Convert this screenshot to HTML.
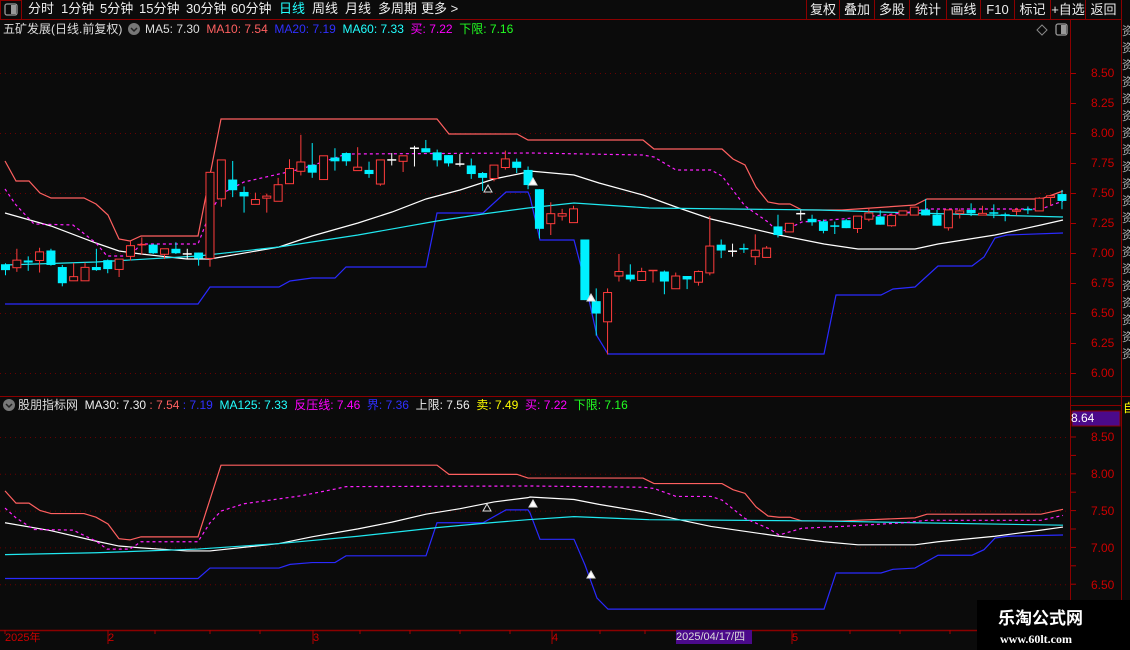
<!DOCTYPE html>
<html><head><meta charset="utf-8"><style>
body{margin:0;background:#0b0b0b;width:1130px;height:650px;overflow:hidden;position:relative;font-family:"Liberation Sans","Noto Sans CJK SC",sans-serif;}
.t{position:absolute;white-space:nowrap;font-size:12px;line-height:14px}
.btn{position:absolute;top:0;height:19px;line-height:19px;color:#eee;font-size:13px;text-align:center;border-right:1px solid #8b0000}
</style></head><body>
<svg width="1130" height="650" style="position:absolute;left:0;top:0" id="s">
<rect x="0" y="0" width="1130" height="650" fill="#0b0b0b"/>
<!-- toolbar -->
<line x1="0" y1="19.5" x2="1122" y2="19.5" stroke="#8b0000"/>
<rect x="0.5" y="0.5" width="21" height="19" fill="none" stroke="#8b0000"/>
<rect x="5" y="4" width="12" height="11" rx="2" fill="none" stroke="#999" stroke-width="1.3"/>
<rect x="11" y="5" width="5" height="9" fill="#999"/>
<line x1="806.5" y1="0" x2="806.5" y2="19" stroke="#8b0000"/>
<!-- panel frames -->
<line x1="1070.5" y1="20" x2="1070.5" y2="630" stroke="#8b0000"/>
<line x1="1121.5" y1="20" x2="1121.5" y2="650" stroke="#8b0000"/>
<line x1="0" y1="396.5" x2="1130" y2="396.5" stroke="#8b0000"/>
<line x1="0" y1="630.5" x2="1070" y2="630.5" stroke="#8b0000" stroke-width="1.5"/>
<line x1="1070" y1="405.5" x2="1121" y2="405.5" stroke="#8b0000"/>
<rect x="1072" y="411" width="48" height="15" fill="#4b0a8a" stroke="#8b0000"/>
<!-- icons top right -->
<path d="M1042 25 l5 5 l-5 5 l-5 -5z" fill="none" stroke="#888"/>
<rect x="1056" y="24" width="11" height="11" rx="2" fill="none" stroke="#999" stroke-width="1.3"/>
<rect x="1061" y="25" width="5" height="9" fill="#999"/>
<!-- legend icons -->
<circle cx="134" cy="29" r="6" fill="#777"/><path d="M131 28 l3 3 l3 -3" stroke="#222" fill="none" stroke-width="1.5"/>
<circle cx="9" cy="405" r="6" fill="#777"/><path d="M6 404 l3 3 l3 -3" stroke="#222" fill="none" stroke-width="1.5"/>
<g id="grid"></g>
<g id="lines" fill="none" stroke-width="1.2"></g>
<use href="#lines" transform="translate(0,437) scale(1,0.6125) translate(0,-73)"/>
<g id="cand"></g>
<g id="tri"></g>
<!-- watermark -->
<rect x="977" y="600" width="153" height="50" fill="#000"/>
</svg>

<div class="t" style="left:28px;top:2px;font-size:13px;color:#eee;word-spacing:0">分时</div>
<div class="t" style="left:61px;top:2px;font-size:13px;color:#eee">1分钟</div>
<div class="t" style="left:100px;top:2px;font-size:13px;color:#eee">5分钟</div>
<div class="t" style="left:139px;top:2px;font-size:13px;color:#eee">15分钟</div>
<div class="t" style="left:186px;top:2px;font-size:13px;color:#eee">30分钟</div>
<div class="t" style="left:231px;top:2px;font-size:13px;color:#eee">60分钟</div>
<div class="t" style="left:279px;top:2px;font-size:13px;color:#2ff">日线</div>
<div class="t" style="left:312px;top:2px;font-size:13px;color:#eee">周线</div>
<div class="t" style="left:345px;top:2px;font-size:13px;color:#eee">月线</div>
<div class="t" style="left:378px;top:2px;font-size:13px;color:#eee">多周期</div>
<div class="t" style="left:421px;top:2px;font-size:13px;color:#eee">更多 &gt;</div>

<div class="btn" style="left:807px;width:32px">复权</div>
<div class="btn" style="left:840px;width:34px">叠加</div>
<div class="btn" style="left:875px;width:34px">多股</div>
<div class="btn" style="left:910px;width:36px">统计</div>
<div class="btn" style="left:947px;width:33px">画线</div>
<div class="btn" style="left:981px;width:33px">F10</div>
<div class="btn" style="left:1015px;width:35px">标记</div>
<div class="btn" style="left:1051px;width:34px">+自选</div>
<div class="btn" style="left:1086px;width:35px">返回</div>

<div class="t" style="left:3px;top:22px;color:#ddd">五矿发展(日线.前复权)</div>
<div class="t" style="left:145px;top:22px;color:#ddd">MA5: 7.30 <span style="color:#ff6060">&nbsp;MA10: 7.54</span> <span style="color:#3030ff">&nbsp;MA20: 7.19</span> <span style="color:#2ff">&nbsp;MA60: 7.33</span> <span style="color:#f0f">&nbsp;买: 7.22</span> <span style="color:#2f2">&nbsp;下限: 7.16</span></div>

<div class="t" style="left:18px;top:398px;color:#ddd">股朋指标网 <span style="color:#eee">&nbsp;MA30: 7.30</span> <span style="color:#ff6060">: 7.54</span> <span style="color:#3030ff">: 7.19</span> <span style="color:#2ff">&nbsp;MA125: 7.33</span> <span style="color:#f0f">&nbsp;反压线: 7.46</span> <span style="color:#3030ff">&nbsp;界: 7.36</span> <span style="color:#eee">&nbsp;上限: 7.56</span> <span style="color:#ff0">&nbsp;卖: 7.49</span> <span style="color:#f0f">&nbsp;买: 7.22</span> <span style="color:#2f2">&nbsp;下限: 7.16</span></div>

<div id="axis"></div>
<div class="t" style="left:1071px;top:411px;color:#fff;font-size:12px">8.64</div>
<div class="t" style="left:1123px;top:401px;color:#ff0;font-size:12px">自</div>

<div class="t" style="left:5px;top:631px;color:#c00;font-size:11px">2025年</div>
<div class="t" style="left:108px;top:631px;color:#c00;font-size:11px">2</div>
<div class="t" style="left:313px;top:631px;color:#c00;font-size:11px">3</div>
<div class="t" style="left:552px;top:631px;color:#c00;font-size:11px">4</div>
<div class="t" style="left:676px;top:630px;width:76px;height:14px;background:#4b0a8a;color:#ddd;font-size:11px">2025/04/17/四</div>
<div class="t" style="left:792px;top:631px;color:#c00;font-size:11px">5</div>

<div class="t" style="left:998px;top:609px;color:#fff;font-size:17px;font-weight:bold;line-height:20px">乐淘公式网</div>
<div class="t" style="left:1000px;top:632px;color:#fff;font-size:12px;font-weight:bold;font-family:'Liberation Serif',serif">www.60lt.com</div>

<script>
const NS="http://www.w3.org/2000/svg";
function el(p,tag,a){const e=document.createElementNS(NS,tag);for(const k in a)e.setAttribute(k,a[k]);p.appendChild(e);return e;}
const grid=document.getElementById('grid');
// top grid & ticks
for(let i=0;i<=10;i++){const y=73+i*30;
 el(grid,'line',{x1:1071,x2:1076,y1:y+.5,y2:y+.5,stroke:'#a00'});
 if(i%2==0) el(grid,'line',{x1:0,x2:1068,y1:y+.5,y2:y+.5,stroke:'#6a0000','stroke-dasharray':'1 4'});}
for(let i=0;i<=8;i++){const y=437+i*18.4;
 el(grid,'line',{x1:1071,x2:1076,y1:y,y2:y,stroke:'#a00'});
 if(i%2==0) el(grid,'line',{x1:0,x2:1068,y1:y+.5,y2:y+.5,stroke:'#6a0000','stroke-dasharray':'1 4'});}
// x ticks
[5,108,155,210,260,313,360,410,460,510,552,600,645,700,792,850,900,950,1000,1050].forEach(x=>el(grid,'line',{x1:x,x2:x,y1:630,y2:634,stroke:'#a00'}));
[108,313,552,792].forEach(x=>el(grid,'line',{x1:x,x2:x,y1:630,y2:644,stroke:'#a00'}));
const ax=document.getElementById('axis');
const labs=['8.50','8.25','8.00','7.75','7.50','7.25','7.00','6.75','6.50','6.25','6.00'];
labs.forEach((l,i)=>{ax.innerHTML+=`<div class="t" style="left:1091px;top:${73+i*30-7}px;color:#c00;font-size:12px">${l}</div>`;});
['8.50','8.00','7.50','7.00','6.50'].forEach((l,i)=>{ax.innerHTML+=`<div class="t" style="left:1091px;top:${437+i*36.9-7}px;color:#c00;font-size:12px">${l}</div>`;});
// right strip chars
const ch='资资资资资资资资资资资资资资资资资资资资资资资';
for(let i=0;i<20;i++){ax.innerHTML+=`<div class="t" style="left:1122px;top:${24+i*17}px;color:#aaa;font-size:12px">${ch[i]}</div>`;}
const L=document.getElementById('lines');
function pl(pts,col,dash){const a={points:pts.map(p=>p.join(',')).join(' '),stroke:col,'vector-effect':'non-scaling-stroke'};if(dash)a['stroke-dasharray']=dash;el(L,'polyline',a);}
pl([[5,161],[16,181],[29,181],[40,193],[51,198],[84,198],[96,204],[108,215],[119,239],[130,241],[141,236],[198,236],[221,119],[437,119],[449,134],[517,134],[528,140],[643,140],[654,149],[722,149],[733,159],[745,165],[756,187],[768,202],[779,204],[790,204],[802,210],[842,210],[915,205],[927,199],[1041,199],[1063,191]],'#ff6060');
pl([[5,304],[198,304],[210,287],[279,287],[290,281],[312,278],[335,278],[346,267],[426,267],[437,213],[483,213],[506,192],[528,192],[530,197],[540,240],[574,240],[585,282],[597,336],[608,354],[824,354],[836,295],[881,295],[893,289],[915,287],[938,266],[972,266],[984,257],[995,238],[1007,235],[1063,233]],'#2a2aff');
pl([[5,213],[51,226],[96,243],[119,251],[141,254],[187,259],[210,259],[279,247],[312,236],[358,223],[392,212],[426,199],[460,190],[494,179],[528,172],[530,171],[574,175],[599,183],[643,195],[676,207],[711,219],[779,235],[824,244],[858,249],[915,249],[938,244],[995,235],[1041,225],[1063,220]],'#ffffff');
pl([[5,265],[96,262],[198,256],[279,247],[358,235],[437,221],[483,214],[528,208],[574,203],[649,208],[819,210],[915,213],[1063,217]],'#20e8f0');
pl([[5,189],[16,205],[34,224],[73,225],[96,243],[107,256],[130,256],[141,244],[198,244],[210,213],[221,194],[244,182],[279,174],[301,169],[335,158],[346,154],[530,153],[643,155],[654,157],[676,170],[711,170],[722,176],[745,206],[768,222],[779,233],[802,222],[842,219],[904,213],[927,209],[1041,209],[1063,201]],'#ff20ff','3 3');
const A=[['c',448,465,445,480],['r',436,458,403,470],['c',437,443,425,467],['r',412,437,400,472],['c',408,450,403,452],['c',456,503,450,512],['r',484,496,444,496],['r',457,496,443,496],['c',456,465,403,467],['c',436,462,434,474],['r',433,463,433,485],['r',394,425,380,437],['R',391,395,370,420],['c',391,416,389,418],['r',403,419,403,433],['c',403,416,384,418],['w',418,418,403,432],['c',414,431,414,452],['r',181,431,181,455],['r',145,258,145,281],['c',202,233,148,253],['c',238,251,222,298],['r',260,274,240,274],['r',250,256,243,298],['r',217,265,197,265],['r',170,214,143,214],['r',151,178,72,190],['c',159,182,96,197],['r',133,202,133,202],['c',138,149,111,176],['c',125,149,123,162],['r',166,176,108,176],['c',174,186,150,197],['r',145,215,145,220],['w',145,145,125,161],['r',133,149,133,180],['w',111,111,104,164],['c',111,123,87,123],['c',123,146,115,164],['c',131,155,131,164],['w',157,157,128,164],['c',161,186,141,200],['c',183,197,180,235],['r',160,199,160,207],['r',142,167,118,173],['c',150,168,141,183],['c',174,218,164,230]];
const B=[['c',172,287,172,315],['r',243,272,210,305],['r',243,250,229,263],['r',229,269,220,269],['c',318,494,318,494],['c',497,533,460,597],['r',472,557,460,652],['r',411,424,360,440],['c',420,434,390,440],['r',411,437,400,437],['R',408,412,408,443],['c',411,440,408,477],['r',424,461,414,461],['c',424,434,424,462],['r',411,442,408,452],['r',337,415,250,422],['c',333,350,318,372],['w',352,352,330,368],['k',345,345,330,357],['r',349,368,303,392],['r',343,370,337,370],['c',280,305,246,312],['r',271,296,271,296],['w',243,243,233,263],['c',258,268,246,278],['c',265,293,260,300],['k',279,279,266,302],['c',262,285,258,285],['r',250,286,250,299],['r',241,259,226,265],['c',251,275,233,275],['r',248,278,244,281],['r',235,247,235,247],['r',224,247,224,247],['c',231,248,200,248],['c',246,278,232,278],['r',232,284,232,292],['r',235,242,228,257],['c',232,242,213,250],['r',242,247,220,247],['k',241,241,216,256],['k',247,247,240,265],['r',232,236,226,248],['k',231,231,222,244],['r',198,235,195,235],['r',191,196,191,220],['c',186,206,174,230]];
const C=document.getElementById('cand');
const f=2.904;
function draw(list,yo,start){list.forEach((c,j)=>{const i=start+j;const x=5.5+11.36*i;
 let [t,bt,bb,wt,wb]=c;bt=yo+bt/f;bb=yo+bb/f;wt=yo+wt/f;wb=yo+wb/f;
 const col=(t=='r'||t=='R')?'#ff3c3c':(t=='w'?'#ffffff':'#00f0ff');
 el(C,'line',{x1:x,x2:x,y1:wt,y2:wb,stroke:col});
 if(t=='r'){el(C,'rect',{x:x-4,y:bt,width:8,height:Math.max(bb-bt,1),fill:'#0b0b0b',stroke:col});}
 else if(t=='c'){el(C,'rect',{x:x-4.5,y:bt,width:9,height:Math.max(bb-bt,1.5),fill:col});}
 else {el(C,'line',{x1:x-4.5,x2:x+4.5,y1:bt,y2:bt,stroke:col,'stroke-width':1.5});}
});}
draw(A,110,0);draw(B,130,47);
const T=document.getElementById('tri');
function tri(x,y,fill){el(T,'path',{d:`M${x} ${y-4} L${x+4} ${y+3} L${x-4} ${y+3}Z`,fill:fill?'#fff':'none',stroke:'#ddd'});}
tri(488,189,0);tri(533,182,1);tri(591,298,1);
tri(487,508,0);tri(533,504,1);tri(591,575,1);
</script>
</body></html>
